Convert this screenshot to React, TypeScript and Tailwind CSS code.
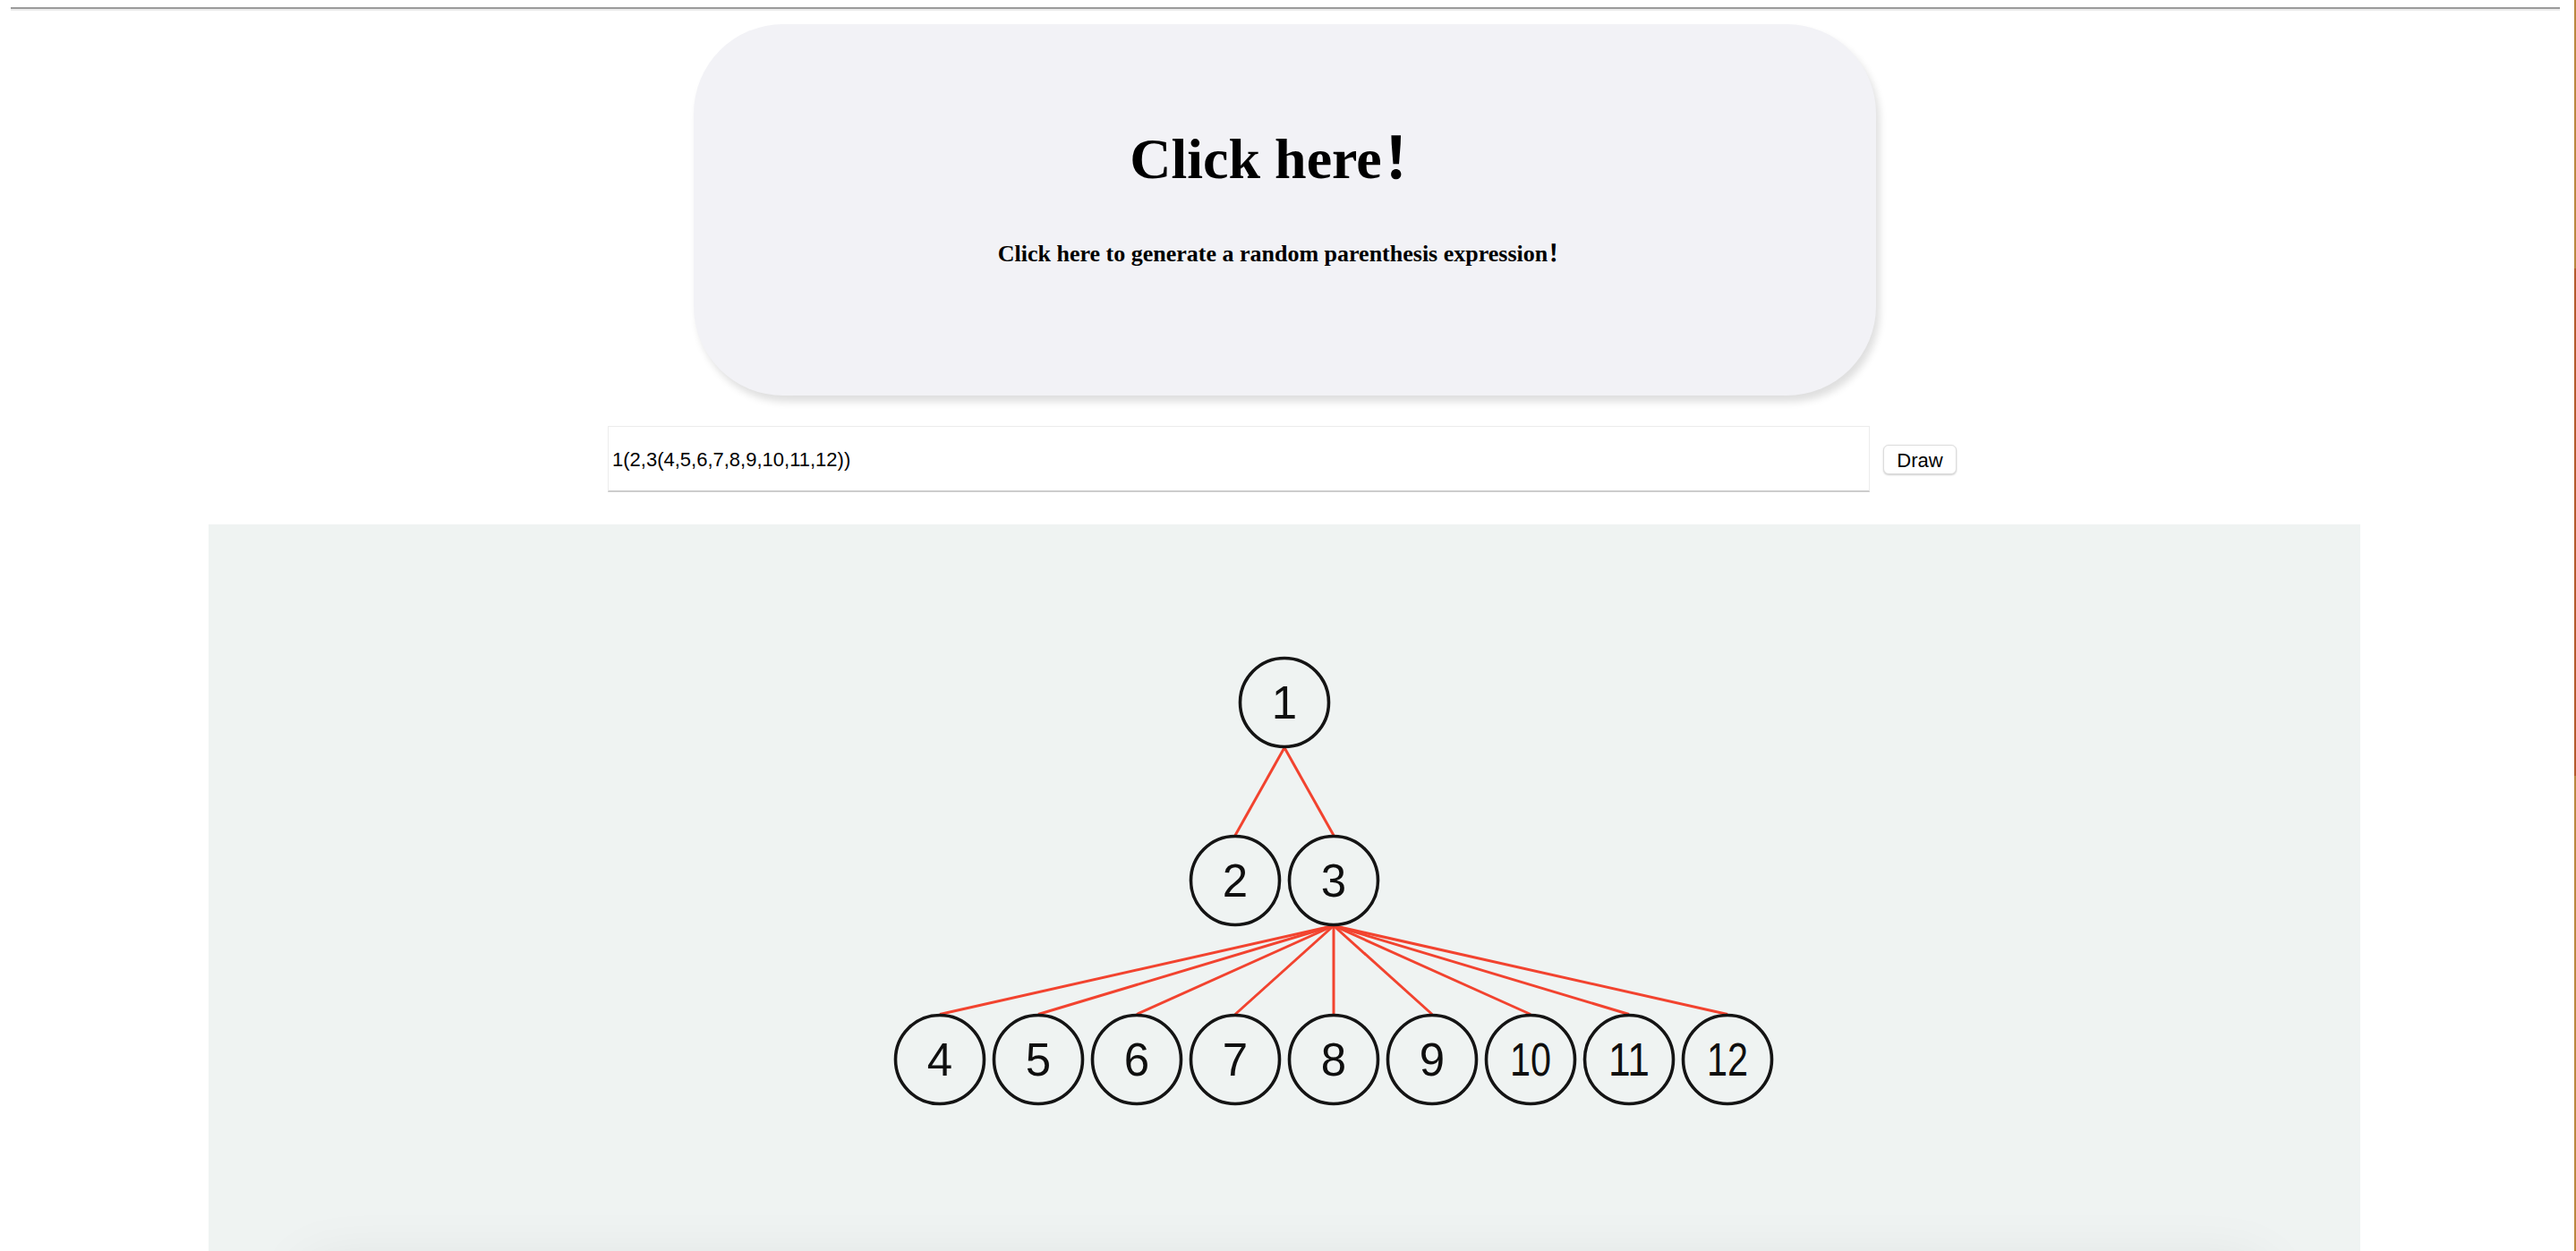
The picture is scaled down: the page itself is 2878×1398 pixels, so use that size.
import React from 'react';

const R = 49.5;
const ROOT = { id: '1', x: 1202, y: 199 };
const MID = [
  { id: '2', x: 1147, y: 398 },
  { id: '3', x: 1257, y: 398 },
];
const LEAVES = ['4', '5', '6', '7', '8', '9', '10', '11', '12'].map((id, i) => ({
  id,
  x: 817 + i * 110,
  y: 598,
}));

function Node({ id, x, y }: { id: string; x: number; y: number }) {
  const wide = id.length > 1;
  return (
    <g>
      <circle cx={x} cy={y} r={R} fill="none" stroke="#141414" strokeWidth={3.6} />
      <text
        x={x}
        y={y + 18}
        textAnchor="middle"
        fontSize={51}
        fill="#0f0f0f"
        fontFamily="'Liberation Sans', Arial, sans-serif"
        {...(wide ? { textLength: 46, lengthAdjust: 'spacingAndGlyphs' } : {})}
      >
        {id}
      </text>
    </g>
  );
}

function Edge({ a, b }: { a: { x: number; y: number }; b: { x: number; y: number } }) {
  return <line x1={a.x} y1={a.y + R + 1} x2={b.x} y2={b.y - R - 1} stroke="#f2432f" strokeWidth={3} />;
}

export default function App() {
  const three = MID[1];
  return (
    <div className="flex w-full min-h-screen bg-white">
      <main className="w-[2870px] shrink-0">
        <div className="ml-[12px] mr-[10px] mt-[8px] h-0 border-t-2 border-b-2 border-t-[#9b9b9b] border-b-[#ececec]" />

        <div className="mx-auto mt-[15px] h-[415px] w-[1321px] rounded-[100px] bg-[#f2f2f6] pt-[119px] text-center text-black shadow-[4px_7px_8px_rgba(0,0,0,0.13)] [font-family:'Liberation_Serif','Noto_Sans_CJK_SC',serif]">
          <h1 className="text-[64px] font-bold leading-none">Click here！</h1>
          <p className="mt-[61px] text-[26px] font-bold leading-none">Click here to generate a random parenthesis expression！</p>
        </div>

        <div className="mt-[34px] ml-[679px] flex items-center gap-[15px] [font-family:'Liberation_Sans',Arial,sans-serif]">
          <input
            defaultValue="1(2,3(4,5,6,7,8,9,10,11,12))"
            className="h-[74px] w-[1410px] border border-[#ececec] border-b-2 border-b-[#cdcdcd] bg-white pl-[4px] pt-[3px] text-[22px] text-black outline-none"
          />
          <button className="h-[33px] w-[82px] rounded-[6px] border border-[#dcdcdc] bg-white text-[22px] text-black shadow-[0_1px_2px_rgba(0,0,0,0.2)]">
            Draw
          </button>
        </div>

        <div className="mt-[36px] ml-[233px] w-[2404px] overflow-hidden bg-[#eff3f2]">
          <svg width={2404} height={830} viewBox="0 0 2404 830" className="block">
            {MID.map((n) => (
              <Edge key={'e' + n.id} a={ROOT} b={n} />
            ))}
            {LEAVES.map((n) => (
              <Edge key={'e' + n.id} a={three} b={n} />
            ))}
            <Node {...ROOT} />
            {MID.map((n) => (
              <Node key={n.id} {...n} />
            ))}
            {LEAVES.map((n) => (
              <Node key={n.id} {...n} />
            ))}
          </svg>
          <div className="mx-[110px] mb-[80px] h-[200px] bg-[#e6eaea] shadow-[0_0_70px_rgba(0,0,0,0.09)]" />
        </div>
      </main>
      <div className="flex-1" />
      <div className="w-[2px] bg-[linear-gradient(to_bottom,#b9873f_0px,#b9873f_300px,#b35a2c_300px,#b35a2c_867px,#b9873f_867px)]" />
    </div>
  );
}
